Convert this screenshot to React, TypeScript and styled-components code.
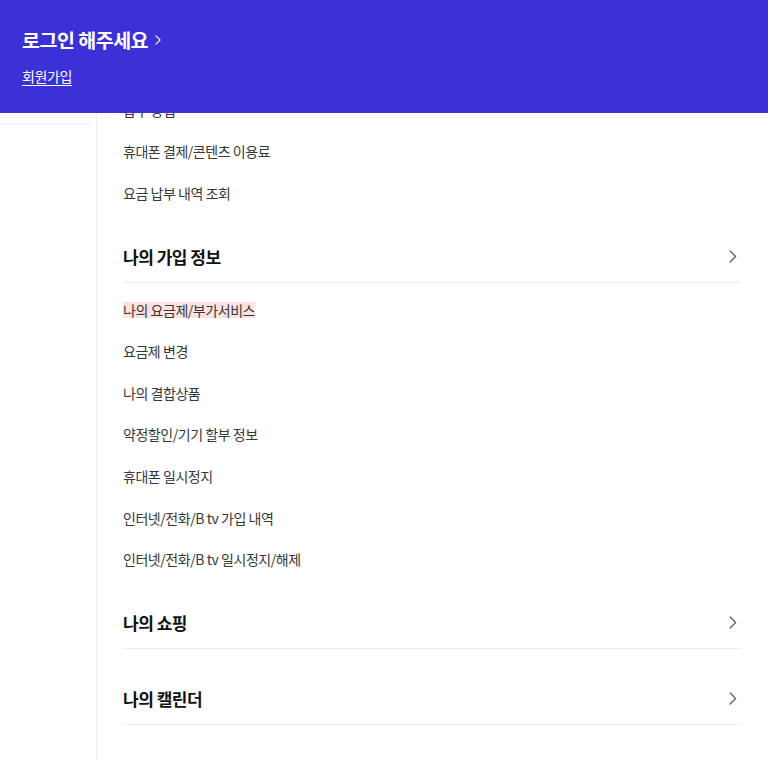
import React from "react";
import styled, { createGlobalStyle } from "styled-components";

const Global = createGlobalStyle`
  html, body { margin: 0; padding: 0; background: #fff; }
  body { font-family: "Noto Sans CJK KR", "Noto Sans", sans-serif; -webkit-font-smoothing: antialiased; }
  * { box-sizing: border-box; }
`;

const Page = styled.div`
  display: flex;
  min-height: 760px;
  background: #fff;
`;

const Header = styled.header`
  position: fixed;
  top: 0;
  left: 0;
  right: 0;
  height: 113px;
  background: #3c31d6;
  color: #fff;
  padding: 26px 22px 0;
  z-index: 10;
`;

const LoginTitle = styled.a`
  display: inline-flex;
  align-items: center;
  gap: 7px;
  font-size: 19.5px;
  font-weight: 700;
  letter-spacing: -0.5px;
  line-height: 28px;
  color: #fff;
  text-decoration: none;
`;

const JoinLink = styled.a`
  display: block;
  margin-top: 12px;
  font-size: 14px;
  line-height: 20px;
  color: #fff;
  text-decoration: underline;
  text-underline-offset: 3px;
  letter-spacing: -0.4px;
`;

const Side = styled.aside`
  width: 97px;
  flex-shrink: 0;
  border-right: 1px solid #eeeeee;
`;

const SideTop = styled.div`
  height: 125px;
  margin-right: 4px;
  border-bottom: 1px solid #f0f0f0;
`;

const Main = styled.main`
  flex: 1;
  padding: 89px 27px 40px 26px;
`;

const ItemList = styled.ul`
  list-style: none;
  margin: 0;
  padding: 0;
`;

const ListAfterHeader = styled(ItemList)`
  padding-top: 6px;
`;

const Item = styled.li`
  height: 41.6px;
  display: flex;
  align-items: center;
  font-size: 14px;
  color: #383838;
  letter-spacing: -0.45px;
`;

const Mark = styled.span<{ $on?: boolean }>`
  background: ${(p) =>
    p.$on ? "linear-gradient(transparent 12%, #fde2e2 12%, #fde2e2 92%, transparent 92%)" : "none"};
`;

const Section = styled.section<{ $collapsed?: boolean }>`
  padding-bottom: ${(p) => (p.$collapsed ? "7px" : "0")};
`;

const SectionHeader = styled.div`
  display: flex;
  align-items: center;
  justify-content: space-between;
  padding: 32px 0 14px;
  border-bottom: 1px solid #eeeeee;
`;

const SectionTitle = styled.h3`
  margin: 0;
  font-size: 17px;
  line-height: 22px;
  font-weight: 700;
  color: #111;
  letter-spacing: -0.5px;
`;

const Chevron = ({ color = "#666", size = 13 }: { color?: string; size?: number }) => (
  <svg width={size * 0.6} height={size} viewBox="0 0 7 12" fill="none">
    <path d="M1 1l5 5-5 5" stroke={color} strokeWidth="1.3" strokeLinecap="round" strokeLinejoin="round" />
  </svg>
);

const ChevronBox = styled.span`
  display: flex;
  width: 14px;
  justify-content: center;
  margin-right: 1px;
`;

const topItems = ["납부 방법", "휴대폰 결제/콘텐츠 이용료", "요금 납부 내역 조회"];
const joinItems = [
  "나의 요금제/부가서비스",
  "요금제 변경",
  "나의 결합상품",
  "약정할인/기기 할부 정보",
  "휴대폰 일시정지",
  "인터넷/전화/B tv 가입 내역",
  "인터넷/전화/B tv 일시정지/해제",
];

export default function App() {
  return (
    <>
      <Global />
      <Header>
        <LoginTitle>
          로그인 해주세요
          <Chevron color="#fff" size={10} />
        </LoginTitle>
        <JoinLink>회원가입</JoinLink>
      </Header>
      <Page>
        <Side>
          <SideTop />
        </Side>
        <Main>
          <ItemList>
            {topItems.map((t) => (
              <Item key={t}>{t}</Item>
            ))}
          </ItemList>
          <Section>
            <SectionHeader>
              <SectionTitle>나의 가입 정보</SectionTitle>
              <ChevronBox>
                <Chevron />
              </ChevronBox>
            </SectionHeader>
            <ListAfterHeader>
              {joinItems.map((t, i) => (
                <Item key={t}>
                  <Mark $on={i === 0}>{t}</Mark>
                </Item>
              ))}
            </ListAfterHeader>
          </Section>
          <Section $collapsed>
            <SectionHeader>
              <SectionTitle>나의 쇼핑</SectionTitle>
              <ChevronBox>
                <Chevron />
              </ChevronBox>
            </SectionHeader>
          </Section>
          <Section $collapsed>
            <SectionHeader>
              <SectionTitle>나의 캘린더</SectionTitle>
              <ChevronBox>
                <Chevron />
              </ChevronBox>
            </SectionHeader>
          </Section>
        </Main>
      </Page>
    </>
  );
}
